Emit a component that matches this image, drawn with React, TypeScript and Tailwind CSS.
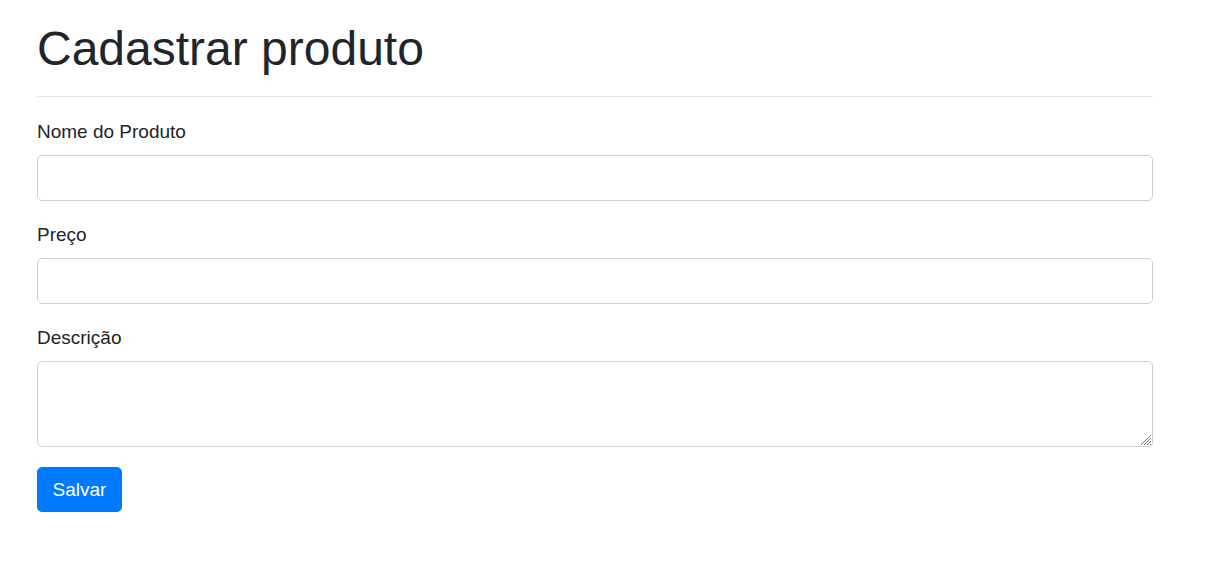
const label = "mb-2 block text-[19px] leading-[30px]";
const field =
  "block w-full rounded-[5px] border border-[#cecfd1] bg-white px-[14px] text-[19px] leading-[29px] text-[#495057] outline-none focus:border-[#80bdff]";
const grip =
  "[&::-webkit-resizer]:bg-[url('data:image/svg+xml,%3Csvg%20xmlns=%22http://www.w3.org/2000/svg%22%20width=%2215%22%20height=%2215%22%3E%3Cpath%20d=%22M4%2014L14%204M7%2014L14%207M10%2014L14%2010M13%2014L14%2013%22%20stroke=%22%23777%22/%3E%3C/svg%3E')] [&::-webkit-resizer]:bg-no-repeat [&::-webkit-resizer]:bg-right-bottom";

export default function App() {
  return (
    <main className="pr-[62px] pl-[37px] pt-5 pb-8 font-['Liberation_Sans',Arial,sans-serif] text-[#212529]">
      <h1 className="text-[48px] leading-[57px]">Cadastrar produto</h1>
      <hr className="mt-[19px] mb-5 border-t border-black/10" />
      <form onSubmit={(event) => event.preventDefault()}>
        <div className="mb-[19px]">
          <label htmlFor="nome" className={label}>Nome do Produto</label>
          <input id="nome" name="nome" type="text" className={`${field} h-[46px]`} />
        </div>
        <div className="mb-[19px]">
          <label htmlFor="preco" className={label}>Preço</label>
          <input id="preco" name="preco" type="text" className={`${field} h-[46px]`} />
        </div>
        <div className="mb-5">
          <label htmlFor="descricao" className={label}>Descrição</label>
          <textarea id="descricao" name="descricao" className={`${field} ${grip} h-[86px] resize-y py-2`} />
        </div>
        <button
          type="submit"
          className="block min-w-[85px] rounded-[5px] border border-[#007bff] bg-[#007bff] px-[14px] py-[7px] text-[19px] leading-[29px] text-white hover:bg-[#0069d9]"
        >
          Salvar
        </button>
      </form>
    </main>
  );
}
